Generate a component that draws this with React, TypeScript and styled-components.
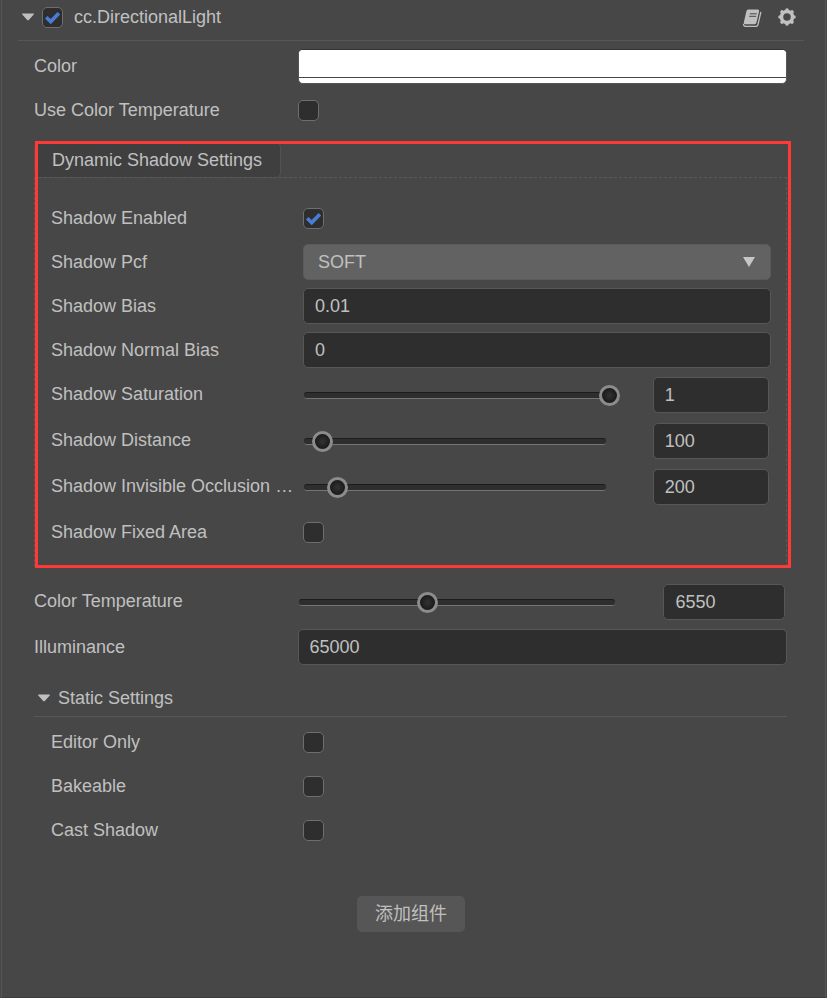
import React, { useId, useState } from "react";
import styled, { createGlobalStyle } from "styled-components";

const GlobalStyle = createGlobalStyle`
  *, *::before, *::after { box-sizing: border-box; }
  body {
    margin: 0;
    background: #474747;
    color: #c0c0c0;
    font: 18px/24px "Liberation Sans", Arial, "Noto Sans CJK SC", sans-serif;
  }
  input, select, button { font: inherit; color: inherit; margin: 0; }
`;

const Panel = styled.main`
  min-height: 100vh;
  margin: 0 1px;
  padding: 0 21px 0 16px;
  border: 1px solid #555;
  border-top: 0;
  border-bottom-color: #3c3c3c;
`;

const Header = styled.header`
  display: flex;
  align-items: center;
  padding: 0 7px 6px 4px;
  height: 41px;
  border-bottom: 1px solid #575757;
`;

const Title = styled.label`
  flex: 1;
  margin-left: 11px;
`;

const FoldButton = styled.button`
  display: flex;
  padding: 0;
  margin-right: 8px;
  border: 0;
  background: none;
`;

const IconButton = styled.button`
  display: flex;
  padding: 0;
  margin-left: 15px;
  border: 0;
  background: none;
`;

const Body = styled.div`
  padding: 3px 17px 0 16px;
`;

const Row = styled.div<{ $tall?: boolean }>`
  display: grid;
  grid-template-columns: 35% minmax(0, 1fr);
  align-items: center;
  height: ${(p) => (p.$tall ? 46 : 44)}px;
`;

const Label = styled.label<{ $raised?: boolean }>`
  overflow: hidden;
  padding-right: 8px;
  padding-bottom: ${(p) => (p.$raised ? 2 : 0)}px;
  text-overflow: ellipsis;
  white-space: nowrap;
`;

const CheckFrame = styled.span`
  display: inline-grid;
  width: 21px;
  height: 21px;
  > * { grid-area: 1 / 1; }
  > svg { place-self: center; pointer-events: none; }
`;

const CheckInput = styled.input`
  appearance: none;
  width: 21px;
  height: 21px;
  border: 1px solid #6e6e6e;
  border-radius: 5px;
  background: #2e2e2e;
`;

const TextField = styled.input`
  width: 100%;
  height: 36px;
  padding: 0 11px;
  border: 1px solid #575757;
  border-radius: 5px;
  outline: 0;
  background: #2e2e2e;
`;

const ColorField = styled.div`
  overflow: hidden;
  height: 35px;
  border: 1px solid #555;
  border-top-color: #333;
  border-radius: 5px;
  background: #fff;
`;

const ColorInput = styled.input`
  appearance: none;
  display: block;
  width: 100%;
  height: 28px;
  padding: 0;
  border: 0;
  border-bottom: 1px solid #474747;
  background: none;
  &::-webkit-color-swatch-wrapper { padding: 0; }
  &::-webkit-color-swatch { border: 0; }
`;

const SelectFrame = styled.div`
  display: grid;
  align-items: center;
  > * { grid-area: 1 / 1; }
  > svg { justify-self: end; margin-right: 16px; pointer-events: none; }
`;

const Select = styled.select`
  appearance: none;
  width: 100%;
  height: 36px;
  padding: 0 14px;
  border: 1px solid #5a5a5a;
  border-radius: 5px;
  outline: 0;
  background: #626262;
`;

const SliderGroup = styled.div`
  display: grid;
  grid-template-columns: 65% 25%;
  justify-content: space-between;
  align-items: center;
  padding: 0 2px 0 1px;
`;

const SliderFrame = styled.div`
  display: grid;
  align-items: center;
  > * { grid-area: 1 / 1; }
`;

const Track = styled.span`
  height: 7px;
  border-top: 1px solid #1c1c1c;
  border-bottom: 1px solid #757575;
  border-radius: 3px;
  background: #2e2e2e;
`;

const Range = styled.input`
  appearance: none;
  width: calc(100% + 21px);
  height: 21px;
  margin-left: -7px;
  background: none;
  outline: 0;
  &::-webkit-slider-thumb {
    appearance: none;
    width: 21px;
    height: 21px;
    border: 3px solid #8c8c8c;
    border-radius: 50%;
    background: radial-gradient(circle, #303030 10%, #181818 75%);
  }
`;

const ShadowGroup = styled.section`
  position: relative;
  margin: 10px 0 12px;
`;

const Tab = styled.button`
  display: block;
  height: 36px;
  padding: 0 18px 0 17px;
  border: 1px solid #525252;
  border-radius: 5px;
  background: #3f3f3f;
`;

const TabPanel = styled.div`
  margin-top: -1px;
  padding: 18px 15px 12px 16px;
  border: 1px dashed #595959;
`;

const Highlight = styled.div`
  position: absolute;
  inset: -1px -4px -1px 1px;
  border: 3px solid #ff3838;
  pointer-events: none;
`;

const SectionHead = styled.div`
  display: flex;
  align-items: center;
  height: 36px;
  margin-top: 12px;
  padding: 0 4px 2px;
  border-bottom: 1px solid #575757;
`;

const SectionBody = styled.div`
  padding: 3px 16px 0 17px;
`;

const Footer = styled.footer`
  display: flex;
  justify-content: center;
  padding: 44px 0;
`;

const AddButton = styled.button`
  height: 36px;
  padding: 0 18px;
  border: 0;
  border-radius: 5px;
  background: #565656;
`;

function FoldArrow() {
  return (
    <svg width="12" height="8" viewBox="0 0 12 8" aria-hidden="true">
      <path d="M.6.5h10.8c.6 0 .7.5.3.9L6.8 6.9c-.5.5-1.1.5-1.6 0L.3 1.4C-.1 1 0 .5.6.5z" fill="#c0c0c0" />
    </svg>
  );
}

function BookIcon() {
  return (
    <svg width="20" height="20" viewBox="0 0 20 20" fill="none" aria-hidden="true">
      <path
        d="M6.2 2.600h9.600q1.700 0 1.300 1.600L14.500 15.600q-.4 1.600-2 1.600H3q-1.600 0-1.200-1.600L4.400 4.200q.4-1.600 1.800-1.600z"
        fill="#c0c0c0"
      />
      <path d="M7.800 6.800h7M7.200 9.300h7" stroke="#474747" />
      <path d="M18.800 5.400L16 17.600q-.5 1.900-2.300 1.900H4q-2.300 0-2.500-2" stroke="#c0c0c0" strokeWidth="1.300" strokeLinecap="round" />
    </svg>
  );
}

function GearIcon() {
  return (
    <svg width="20" height="20" viewBox="0 0 20 20" fill="none" stroke="#c0c0c0" aria-hidden="true">
      <circle cx="10" cy="10" r="5.500" strokeWidth="3.500" />
      <path
        strokeWidth="3.600"
        strokeLinecap="round"
        d="M10 3v1M10 16v1M3 10h1M16 10h1M5 5l.6.6M14.400 14.400l.6.6M5 15l.6-.6M14.400 5.600l.6-.6"
      />
    </svg>
  );
}

function Check({ id, initial = false }: { id: string; initial?: boolean }) {
  const [on, setOn] = useState(initial);
  return (
    <CheckFrame>
      <CheckInput id={id} type="checkbox" checked={on} onChange={(e) => setOn(e.target.checked)} />
      {on && (
        <svg width="17" height="17" viewBox="0 0 17 17" fill="none" aria-hidden="true">
          <path d="M2.200 8.300l4.500 4.300 8.200-8.400" stroke="#4a7cd6" strokeWidth="3.600" />
        </svg>
      )}
    </CheckFrame>
  );
}

function CheckRow({ label, initial }: { label: string; initial?: boolean }) {
  const id = useId();
  return (
    <Row>
      <Label htmlFor={id}>{label}</Label>
      <Check id={id} initial={initial} />
    </Row>
  );
}

function TextRow({ label, value }: { label: string; value: string }) {
  const id = useId();
  return (
    <Row>
      <Label htmlFor={id}>{label}</Label>
      <TextField id={id} defaultValue={value} />
    </Row>
  );
}

type SliderProps = { label: string; min: number; max: number; step?: number; initial: number };

function SliderRow({ label, min, max, step = 1, initial }: SliderProps) {
  const id = useId();
  const [value, setValue] = useState(String(initial));
  return (
    <Row $tall>
      <Label $raised htmlFor={id}>{label}</Label>
      <SliderGroup>
        <SliderFrame>
          <Track />
          <Range
            type="range"
            aria-label={label}
            min={min}
            max={max}
            step={step}
            value={value}
            onChange={(e) => setValue(e.target.value)}
          />
        </SliderFrame>
        <TextField id={id} value={value} onChange={(e) => setValue(e.target.value)} />
      </SliderGroup>
    </Row>
  );
}

export default function App() {
  return (
    <>
      <GlobalStyle />
      <Panel>
        <Header>
          <FoldButton aria-label="Fold component"><FoldArrow /></FoldButton>
          <Check id="light-enabled" initial />
          <Title htmlFor="light-enabled">cc.DirectionalLight</Title>
          <IconButton aria-label="Documentation"><BookIcon /></IconButton>
          <IconButton aria-label="Component menu"><GearIcon /></IconButton>
        </Header>
        <Body>
          <Row>
            <Label htmlFor="light-color">Color</Label>
            <ColorField>
              <ColorInput id="light-color" type="color" defaultValue="#ffffff" />
            </ColorField>
          </Row>
          <CheckRow label="Use Color Temperature" />
          <ShadowGroup>
            <Tab>Dynamic Shadow Settings</Tab>
            <TabPanel>
              <CheckRow label="Shadow Enabled" initial />
              <Row>
                <Label htmlFor="shadow-pcf">Shadow Pcf</Label>
                <SelectFrame>
                  <Select id="shadow-pcf" defaultValue="SOFT">
                    <option>HARD</option>
                    <option>SOFT</option>
                    <option>SOFT_2X</option>
                  </Select>
                  <svg width="12" height="10" viewBox="0 0 12 10" aria-hidden="true">
                    <path d="M0 0h12L6 10z" fill="#c6c6c6" />
                  </svg>
                </SelectFrame>
              </Row>
              <TextRow label="Shadow Bias" value="0.01" />
              <TextRow label="Shadow Normal Bias" value="0" />
              <SliderRow label="Shadow Saturation" min={0} max={1} step={0.01} initial={1} />
              <SliderRow label="Shadow Distance" min={0} max={2000} initial={100} />
              <SliderRow label="Shadow Invisible Occlusion Range" min={0} max={2000} initial={200} />
              <CheckRow label="Shadow Fixed Area" />
            </TabPanel>
            <Highlight />
          </ShadowGroup>
          <SliderRow label="Color Temperature" min={1000} max={15000} initial={6550} />
          <TextRow label="Illuminance" value="65000" />
          <SectionHead>
            <FoldButton aria-label="Fold static settings"><FoldArrow /></FoldButton>
            Static Settings
          </SectionHead>
          <SectionBody>
            <CheckRow label="Editor Only" />
            <CheckRow label="Bakeable" />
            <CheckRow label="Cast Shadow" />
          </SectionBody>
        </Body>
        <Footer>
          <AddButton>添加组件</AddButton>
        </Footer>
      </Panel>
    </>
  );
}
